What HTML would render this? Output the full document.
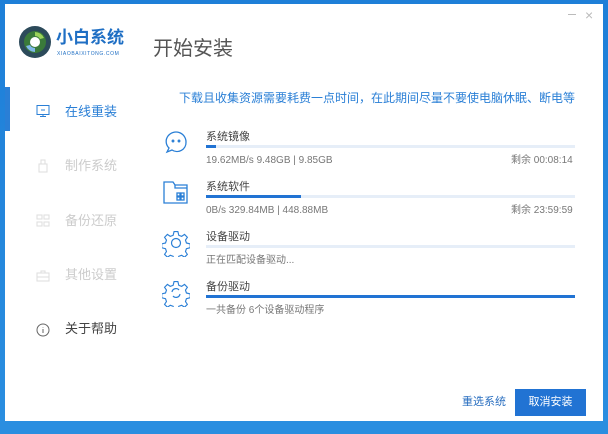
<!DOCTYPE html>
<html><head><meta charset="utf-8"><style>
*{margin:0;padding:0;box-sizing:border-box}
body{width:608px;height:434px;background:linear-gradient(#1e7fd8,#2a8ee0);position:relative;overflow:hidden;font-family:"Liberation Sans","Noto Sans CJK SC",sans-serif;line-height:1.2}
.win{position:absolute;left:5px;top:4px;width:598px;height:417px;background:#fff}
.abs{position:absolute}
.nav{position:absolute;left:60px;font-size:13px;color:#ccc}
.title{font-size:11px;color:#444}
.bar{position:absolute;left:206px;width:369px;height:3px;background:#e6eef8}
.bar i{display:block;height:3px;background:#2173d3}
.st{font-size:10px;color:#777}
</style></head><body>
<div class="win">
 <div class="abs" style="left:0;top:83px;width:5px;height:44px;background:#2a7fd6"></div>
 <svg class="abs" style="left:12px;top:20px" width="36" height="36" viewBox="0 0 36 36"><circle cx="18" cy="18" r="16" fill="#2c4a5a"/><circle cx="18" cy="18" r="11" fill="#3a7a3a"/><path d="M18 8a10 10 0 0 1 9 6l-4 1a6 6 0 0 0-5-3z" fill="#9bd25a"/><path d="M18 28a10 10 0 0 1-9-6l4-1a6 6 0 0 0 5 3z" fill="#7fb8e8"/><circle cx="18" cy="18" r="5" fill="#fff"/></svg>
 <div class="abs" style="left:51px;top:24px;font-size:17px;font-weight:bold;color:#1f6fc4">小白系统</div>
 <div class="abs" style="left:52px;top:47px;font-size:5px;color:#1f6fc4;letter-spacing:.6px">XIAOBAIXITONG.COM</div>
 <div class="abs" style="left:148px;top:33px;font-size:20px;color:#555">开始安装</div>
 <div class="abs" style="left:563px;top:10px;width:8px;height:1px;background:#bbb"></div>
 <div class="abs" style="left:580px;top:3px;font-size:14px;color:#bbb">×</div>

 <svg class="abs" style="left:31px;top:100px" width="14" height="14" viewBox="0 0 14 14" fill="none" stroke="#2a7fd6"><rect x="1" y="1.5" width="12" height="9"/><path d="M7 10.5v2M4 12.5h6M5 6h4"/></svg>
 <div class="nav" style="top:100px;color:#2a7fd6">在线重装</div>
 <svg class="abs" style="left:33px;top:155px" width="10" height="14" viewBox="0 0 10 14" fill="none" stroke="#ddd"><rect x="1" y="5" width="8" height="8"/><path d="M3 5V1h4v4"/></svg>
 <div class="nav" style="top:154px">制作系统</div>
 <svg class="abs" style="left:31px;top:210px" width="14" height="14" viewBox="0 0 14 14" fill="none" stroke="#ddd"><rect x="1" y="1" width="5" height="4"/><rect x="8" y="1" width="5" height="4"/><rect x="1" y="8" width="5" height="4"/><rect x="8" y="8" width="5" height="4"/></svg>
 <div class="nav" style="top:209px">备份还原</div>
 <svg class="abs" style="left:31px;top:265px" width="14" height="14" viewBox="0 0 14 14" fill="none" stroke="#ddd"><rect x="1" y="4" width="12" height="8"/><path d="M5 4V2h4v2M1 8h12"/></svg>
 <div class="nav" style="top:263px">其他设置</div>
 <svg class="abs" style="left:31px;top:319px" width="14" height="14" viewBox="0 0 14 14" fill="none" stroke="#666"><circle cx="7" cy="7" r="6"/><path d="M7 6v4M7 4v.5"/></svg>
 <div class="nav" style="top:317px;color:#444">关于帮助</div>

 <div class="abs" style="left:174px;top:87px;font-size:12px;color:#2a7fd6">下载且收集资源需要耗费一点时间，在此期间尽量不要使电脑休眠、断电等</div>
</div>
<svg class="abs" style="left:162px;top:128px" width="28" height="28" viewBox="0 0 28 28" fill="none" stroke="#2a7fd6" stroke-width="1.3"><path d="M6 8a10 10 0 0 1 18 6a9 9 0 0 1-14 8l-5 2 2-4a9 9 0 0 1-1-12z"/><circle cx="11" cy="13" r=".8"/><circle cx="17" cy="13" r=".8"/></svg>
<svg class="abs" style="left:163px;top:180px" width="26" height="24" viewBox="0 0 26 24" fill="none" stroke="#2a7fd6" stroke-width="1.3"><path d="M1 2h9l2 3h12v18H1z"/><path d="M12 5v3h12"/><rect x="14" y="13" width="3" height="3"/><rect x="18" y="13" width="3" height="3"/><rect x="14" y="17" width="3" height="3"/><rect x="18" y="17" width="3" height="3"/></svg>
<svg class="abs" style="left:162px;top:229px" width="28" height="28" viewBox="0 0 28 28" fill="none" stroke="#2a7fd6" stroke-width="1.2"><path d="M12 2h4l1 4 3 1 3-2 3 3-2 3 1 3 4 1v4l-4 1-1 3 2 3-3 3-3-2-3 1-1 4h-4l-1-4-3-1-3 2-3-3 2-3-1-3-4-1v-4l4-1 1-3-2-3 3-3 3 2 3-1z" transform="scale(.95) translate(.7 .7)"/><circle cx="14" cy="14" r="4.5"/></svg>
<svg class="abs" style="left:162px;top:279px" width="28" height="28" viewBox="0 0 28 28" fill="none" stroke="#2a7fd6" stroke-width="1.2"><path d="M12 2h4l1 4 3 1 3-2 3 3-2 3 1 3 4 1v4l-4 1-1 3 2 3-3 3-3-2-3 1-1 4h-4l-1-4-3-1-3 2-3-3 2-3-1-3-4-1v-4l4-1 1-3-2-3 3-3 3 2 3-1z" transform="scale(.95) translate(.7 .7)"/><path d="M10 13a4 4 0 0 1 7-2M18 15a4 4 0 0 1-7 2"/></svg>

<div class="abs title" style="left:206px;top:131px">系统镜像</div>
<div class="bar" style="top:145px"><i style="width:10px"></i></div>
<div class="abs st" style="left:206px;top:155px">19.62MB/s 9.48GB | 9.85GB</div>
<div class="abs st" style="left:511px;top:155px">剩余 00:08:14</div>

<div class="abs title" style="left:206px;top:181px">系统软件</div>
<div class="bar" style="top:195px"><i style="width:95px"></i></div>
<div class="abs st" style="left:206px;top:205px">0B/s 329.84MB | 448.88MB</div>
<div class="abs st" style="left:511px;top:205px">剩余 23:59:59</div>

<div class="abs title" style="left:206px;top:231px">设备驱动</div>
<div class="bar" style="top:245px"></div>
<div class="abs st" style="left:206px;top:255px">正在匹配设备驱动...</div>

<div class="abs title" style="left:206px;top:281px">备份驱动</div>
<div class="bar" style="top:295px"><i style="width:369px"></i></div>
<div class="abs st" style="left:206px;top:305px">一共备份 6个设备驱动程序</div>

<div class="abs" style="left:462px;top:396px;font-size:11px;color:#2a6fc0">重选系统</div>
<div class="abs" style="left:515px;top:389px;width:71px;height:27px;background:#2173d3;color:#fff;font-size:11px;text-align:center;line-height:27px">取消安装</div>
</body></html>
